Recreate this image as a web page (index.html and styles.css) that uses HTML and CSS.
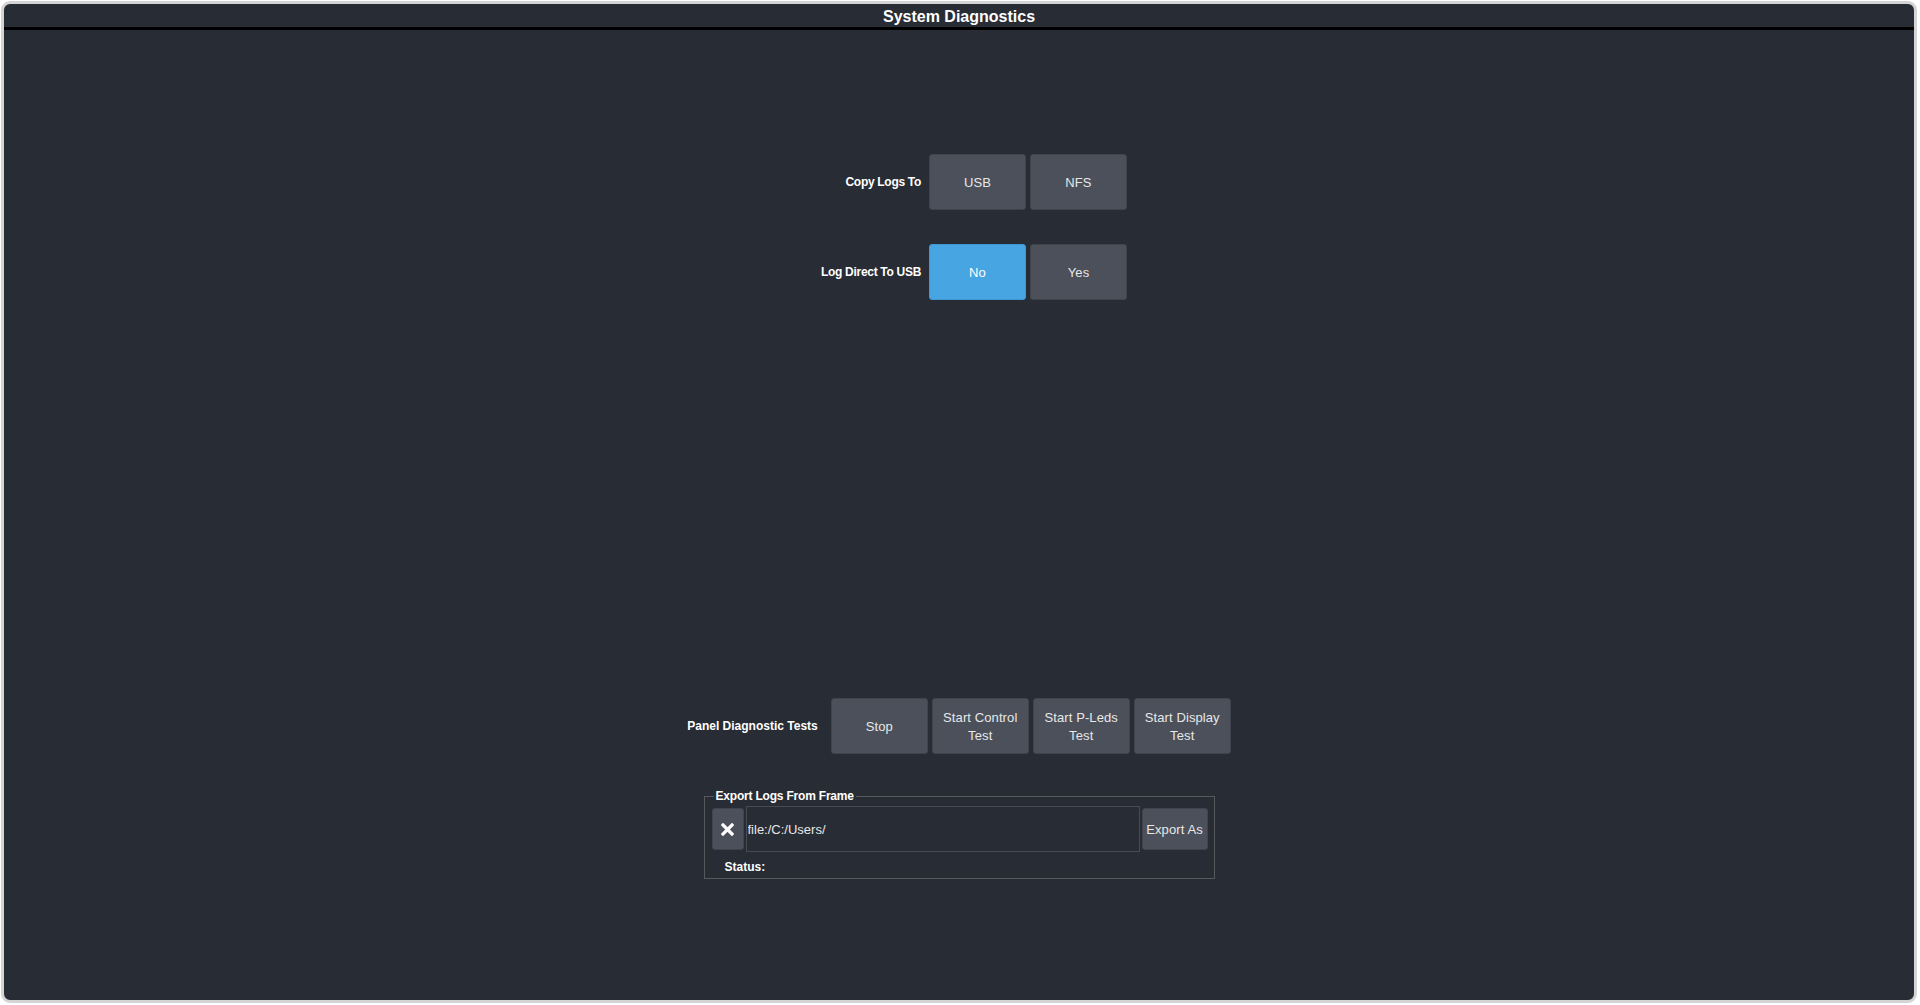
FILE: index.html
```html
<!DOCTYPE html>
<html lang="en">
<head>
  <meta charset="UTF-8" />
  <meta name="viewport" content="width=device-width, initial-scale=1.0" />
  <title>System Diagnostics</title>
  <link rel="stylesheet" href="styles.css">
</head>
<body>
  <div class="diag-window">
    <div class="diag-header">System Diagnostics</div>
    <div class="diag-body">
      <div class="settings-wrap">
        <div class="settings">
          <div class="set-label">Copy Logs To</div>
          <button class="btn">USB</button>
          <button class="btn">NFS</button>

          <div class="set-label">Log Direct To USB</div>
          <button class="btn btn-active">No</button>
          <button class="btn">Yes</button>
        </div>
      </div>

      <div class="tests-row">
        <div class="set-label tests-label">Panel Diagnostic Tests</div>
        <div class="tests-buttons">
          <button class="btn btn-test">Stop</button>
          <button class="btn btn-test">Start Control<br>Test</button>
          <button class="btn btn-test">Start P-Leds<br>Test</button>
          <button class="btn btn-test">Start Display<br>Test</button>
        </div>
      </div>

      <fieldset class="export-box">
        <legend>Export Logs From Frame</legend>
        <div class="export-row">
          <button class="btn btn-clear" title="Clear">
            <svg width="13" height="13" viewBox="0 0 13 13">
              <path d="M2 2 L11 11 M11 2 L2 11" stroke="#fff" stroke-width="3.2" stroke-linecap="square" fill="none" />
            </svg>
          </button>
          <input class="export-path" type="text" value="file:/C:/Users/" />
          <button class="btn btn-export">Export As</button>
        </div>
        <div class="export-status">Status:</div>
      </fieldset>
    </div>
  </div>
</body>
</html>
```

FILE: styles.css
```css
html, body {
  margin: 0;
  height: 100%;
}
body {
  background: #ffffff;
  font-family: "Liberation Sans", Arial, sans-serif;
  color: #f0f0f0;
}
.diag-window {
  box-sizing: border-box;
  margin: 1px 3px 2px 1px;
  height: calc(100vh - 3px);
  background: #282c34;
  border: 3px solid #d4d4d4;
  border-radius: 9px;
  display: flex;
  flex-direction: column;
  overflow: hidden;
}
.diag-header {
  height: 22px;
  padding-top: 1px;
  line-height: 23px;
  border-bottom: 3px solid #000;
  text-align: center;
  font-size: 16px;
  font-weight: bold;
  color: #fff;
}
.diag-body {
  flex: 1;
  display: flex;
  flex-direction: column;
}
.settings-wrap {
  display: flex;
  justify-content: center;
  padding: 124px 0 0 30px;
}
.settings {
  display: grid;
  grid-template-columns: auto 97px 97px;
  grid-auto-rows: 56px;
  column-gap: 4px;
  row-gap: 34px;
  align-items: center;
}
.set-label {
  font-size: 12px;
  font-weight: bold;
  letter-spacing: -0.3px;
  color: #fff;
  text-align: right;
  padding-right: 4px;
}
.btn {
  box-sizing: border-box;
  height: 100%;
  margin: 0;
  padding: 0;
  background: #4b505b;
  border: 1px solid #40444d;
  border-radius: 3px;
  color: #e8e8e8;
  font-family: "Liberation Sans", Arial, sans-serif;
  font-size: 13px;
  line-height: 18px;
  padding-top: 1px;
  letter-spacing: 0.1px;
}
.btn-active {
  background: #47a5e1;
  border-color: #3f98d2;
  color: #fff;
}
.tests-row {
  display: flex;
  justify-content: center;
  align-items: center;
  margin-top: 398px;
  gap: 13px;
}
.tests-label {
  padding-right: 0;
  letter-spacing: 0;
}
.tests-buttons {
  display: flex;
  gap: 4px;
  height: 56px;
}
.btn-test {
  width: 97px;
}
.export-box {
  box-sizing: border-box;
  width: 511px;
  margin: 35px auto 0;
  padding: 3px 6px 4px 7px;
  border: 1px solid #56585c;
}
.export-box legend {
  margin-left: 2px;
  padding: 0 2px;
  font-size: 12px;
  line-height: 14px;
  font-weight: bold;
  letter-spacing: -0.2px;
  color: #fff;
}
.export-row {
  display: flex;
  align-items: center;
  gap: 2px;
  height: 46px;
}
.btn-clear {
  width: 32px;
  height: 42px;
  padding: 0;
  display: flex;
  align-items: center;
  justify-content: center;
}
.btn-export {
  width: 66px;
  height: 42px;
}
.export-path {
  box-sizing: border-box;
  width: 394px;
  height: 46px;
  margin: 0;
  padding: 0 0 0 1px;
  background: #282c34;
  border: 1px solid #484b51;
  color: #e8e8e8;
  font-family: "Liberation Sans", Arial, sans-serif;
  font-size: 13px;
  outline: none;
}
.export-status {
  margin: 8px 0 0 13px;
  font-size: 12px;
  line-height: 14px;
  font-weight: bold;
  color: #fff;
}
```
